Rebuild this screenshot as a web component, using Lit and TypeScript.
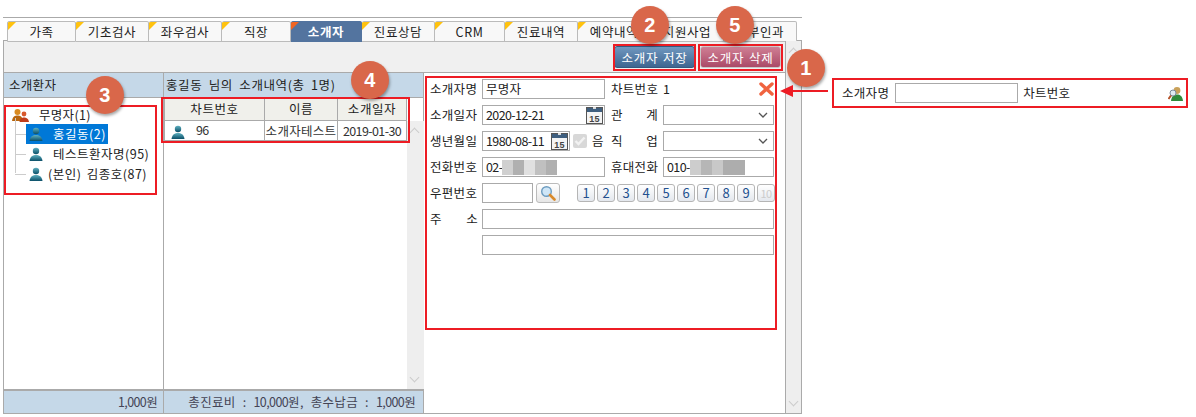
import { LitElement, html, svg, css } from "lit";
import { customElement } from "lit/decorators.js";

const TABS = ["가족", "기초검사", "좌우검사", "직장", "소개자", "진료상담", "CRM", "진료내역", "예약내역", "지원사업", "산부인과"];
const TAB_WIDTHS = [69, 73, 73, 69, 71, 73, 70, 73, 73, 73, 73];

const person = () => html`<svg class="person" width="14" height="14" viewBox="0 0 14 14">
  <defs><linearGradient id="pg" x1="0" y1="0" x2="0" y2="1"><stop offset="0" stop-color="#5fb0c0"/><stop offset="1" stop-color="#0a4f68"/></linearGradient></defs>
  <circle cx="7" cy="4" r="3.2" fill="url(#pg)"/>
  <path d="M0.5 14 C1 9.5 4 8 7 8 C10 8 13 9.5 13.5 14 Z" fill="url(#pg)"/>
</svg>`;

const users = () => svg`<svg width="17" height="14" viewBox="0 0 17 14">
  <circle cx="5.5" cy="4" r="3" fill="#d98a20"/>
  <path d="M0 13 C0.5 8.5 3 7.5 5.5 7.5 C8 7.5 10.5 8.5 11 13 Z" fill="#b8660f"/>
  <circle cx="12" cy="6" r="2.4" fill="#d8582c"/>
  <path d="M7.5 14 C8 10.5 10 9.5 12 9.5 C14 9.5 16.5 10.5 17 14 Z" fill="#bf3d1c"/>
</svg>`;

const calendar = () => html`<svg class="cal" width="17" height="17" viewBox="0 0 17 17">
  <rect x="0.5" y="0.5" width="16" height="16" fill="#f4f4f4" stroke="#555"/>
  <rect x="1" y="1" width="15" height="4" fill="#3f5f7f"/>
  <rect x="7" y="0" width="3" height="2" fill="#ddd"/>
  <text x="8.5" y="14.5" text-anchor="middle" font-size="9" font-weight="700" font-family="Liberation Sans" fill="#444">15</text>
</svg>`;

const phoneBlur = (shades: string[]) => html`<span class="blur">
  ${shades.map((c) => html`<i style="background:${c}"></i>`)}
</span>`;

@customElement("app-root")
export class AppRoot extends LitElement {
  static styles = css`
    :host {
      display: block;
      width: 1196px;
      height: 417px;
      position: relative;
      overflow: hidden;
      background: #fff;
      color: #222;
      letter-spacing: 0.3px;
      font: 12.5px/16px "Noto Sans CJK KR", sans-serif;
    }
    .num { letter-spacing: -0.6px; }
    .shell {
      width: 799px;
      margin: 0 0 0 3px;
      padding-top: 17px;
    }
    .topline {
      height: 1px;
      background: #aaa;
      margin-bottom: 3px;
    }
    .tabs {
      display: flex;
      padding-left: 4px;
      height: 20px;
      margin-bottom: -1px;
    }
    .tab {
      position: relative;
      box-sizing: border-box;
      height: 21px;
      border: 1px solid #bbb;
      border-left-width: 0;
      border-radius: 2px 2px 0 0;
      background: #f8f8f8;
      text-align: center;
      line-height: 20px;
      letter-spacing: 0.6px;
      overflow: hidden;
    }
    .tab:first-child { border-left-width: 1px; }
    .tab::before {
      content: "";
      position: absolute;
      left: 0;
      top: 0;
      border-style: solid;
      border-width: 8px 8px 0 0;
      border-color: #ffc20e transparent transparent transparent;
    }
    .tab.on {
      background: #53749f;
      color: #fff;
      font-weight: 700;
      border-color: #53749f;
    }
    .tab.on::before { border-top-color: #f26522; }
    .panel {
      box-sizing: border-box;
      height: 374px;
      border: 1px solid #aaa;
      display: grid;
      grid-template-columns: 1fr 16px;
    }
    .content { display: flex; flex-direction: column; min-width: 0; }
    .toolbar {
      box-sizing: border-box;
      height: 32px;
      background: #f0f0f0;
      border-bottom: 1px solid #aaa;
      display: flex;
      justify-content: flex-end;
      align-items: flex-start;
      gap: 5px;
      padding: 5px 4px 0 0;
    }
    .btn {
      box-sizing: border-box;
      height: 22px;
      border-radius: 3px;
      color: #fff;
      text-align: center;
      line-height: 21px;
      letter-spacing: 0.8px;
      word-spacing: 1px;
      border: 1px solid #888;
    }
    .btn.save { width: 81px; background: linear-gradient(#6f97bf, #3f6691); border-color: #35597f; }
    .btn.del { width: 81px; background: linear-gradient(#cf7f94, #ab4a68); border-color: #c9c9c9; }
    .body {
      flex: 1;
      display: grid;
      grid-template-columns: 160px 260px 1fr;
      min-height: 0;
    }
    .left, .mid {
      display: flex;
      flex-direction: column;
      border-right: 1px solid #aaa;
      min-height: 0;
    }
    .head {
      height: 24px;
      background: #c5d8e8;
      border-bottom: 1px solid #aaa;
      line-height: 23px;
      padding-left: 5px;
      flex: none;
    }
    .mid .head { padding-left: 2px; letter-spacing: 0.6px; word-spacing: 3px; }
    .foot {
      height: 24px;
      flex: none;
      box-sizing: border-box;
      background: #c5d8e8;
      border-top: 2px solid #aaa;
      text-align: right;
      line-height: 21px;
      color: #445;
      padding-right: 5px;
    }
    .mid .foot { padding-right: 7px; letter-spacing: 0.3px; word-spacing: 4px; }
    .tree {
      flex: 1;
      padding-top: 7px;
      position: relative;
    }
    .node {
      height: 20px;
      display: flex;
      align-items: center;
      white-space: nowrap;
    }
    .node.root { padding-left: 8px; gap: 10px; margin-bottom: -1px; }
    .node.leaf {
      position: relative;
      margin-left: 22px;
      gap: 10px;
      padding-left: 3px;
      width: max-content;
      box-sizing: border-box;
      letter-spacing: 0.5px;
    }
    .node.leaf::before {
      content: "";
      position: absolute;
      left: -11px;
      top: 10px;
      width: 11px;
      height: 1px;
      background: #ccc;
    }
    .node.leaf.sel { background: #0078d7; color: #fff; padding-right: 2px; }
    .node.leaf.tight { gap: 5px; word-spacing: 2px; }
    .branch {
      position: absolute;
      left: 11px;
      top: 20px;
      height: 55px;
      border-left: 1px solid #ccc;
    }
    .gridwrap {
      flex: 1;
      display: grid;
      grid-template-columns: 1fr 17px;
      grid-template-rows: 23px 1fr;
      min-height: 0;
    }
    .table {
      grid-row: 1 / 3;
      border-collapse: collapse;
      table-layout: fixed;
      width: 242px;
      height: max-content;
      margin-top: -1px;
    }
    .table th, .table td {
      border: 1px solid #aaa;
      padding: 0;
      font-weight: 400;
      white-space: nowrap;
      overflow: hidden;
    }
    .table th { height: 22px; background: #f0f0eb; text-align: center; letter-spacing: 0.6px; }
    .table td { height: 19px; text-align: center; color: #333; }
    .table td.chart { text-align: left; padding-left: 6px; }
    .table td.chart span { margin-left: 11px; vertical-align: 2px; }
    .table td.chart svg { vertical-align: -2px; }
    .gutter {
      grid-column: 2;
      grid-row: 2;
      background: #eee;
      position: relative;
    }
    .form {
      padding: 6px 0 0 6px;
      display: flex;
      flex-direction: column;
      gap: 6px;
    }
    .row {
      display: flex;
      align-items: center;
      height: 20px;
      white-space: nowrap;
    }
    .lab { width: 52px; flex: none; }
    .lab.gap { display: flex; justify-content: space-between; padding-right: 4px; box-sizing: border-box; }
    .lab2 { margin-left: 6px; width: 52px; flex: none; }
    .lab2.gap { display: flex; justify-content: space-between; padding-right: 5px; box-sizing: border-box; }
    .inp {
      box-sizing: border-box;
      height: 20px;
      border: 1px solid #aaa;
      background: #fff;
      line-height: 18px;
      padding-left: 3px;
      display: flex;
      align-items: center;
      flex: none;
    }
    .w123 { width: 123px; }
    .w88 { width: 88px; }
    .w111 { width: 111px; }
    .w50 { width: 51px; }
    .full { width: 292px; }
    .inp .cal { margin-left: auto; margin-right: 1px; }
    .caret { margin-left: auto; margin-right: 5px; }
    .check {
      box-sizing: border-box;
      width: 14px;
      height: 14px;
      margin-left: 3px;
      background: #d8d8d8;
      border-radius: 2px;
      display: flex;
      align-items: center;
      justify-content: center;
    }
    .um { margin-left: 5px; width: 13px; }
    .x { margin-left: auto; margin-right: 11px; }
    .blur { display: inline-flex; height: 15px; margin-left: 0; }
    .blur i { display: block; width: 11px; height: 15px; }
    .search {
      box-sizing: border-box;
      width: 24px;
      height: 20px;
      margin-left: 3px;
      border: 1px solid #bbb;
      border-radius: 3px;
      background: linear-gradient(#fff, #e6e6e6);
      display: flex;
      align-items: center;
      justify-content: center;
    }
    .pages { display: flex; gap: 2px; margin-left: 17px; }
    .page {
      box-sizing: border-box;
      width: 18px;
      height: 18px;
      border: 1px solid #b5b5b5;
      border-radius: 3px;
      background: linear-gradient(#fff, #e4e8ee);
      color: #23508f;
      text-align: center;
      line-height: 16px;
      font-size: 13px;
      letter-spacing: 0;
    }
    .page.off { color: #ccc; font-size: 11px; letter-spacing: -0.5px; }
    .side {
      background: #eee;
      border-left: 1px solid #aaa;
      position: relative;
    }
    .chev {
      position: absolute;
      left: 4px;
      width: 6px;
      height: 6px;
      border-left: 1px solid #ccc;
      border-top: 1px solid #ccc;
      transform: rotate(45deg);
    }
    .chev.down { transform: rotate(225deg); }

    /* annotations over the screenshot */
    .mark {
      position: absolute;
      box-sizing: border-box;
      border: 2px solid #ed1c24;
      pointer-events: none;
    }
    .dot {
      position: absolute;
      width: 38px;
      height: 38px;
      border-radius: 50%;
      background: #d9674a;
      box-shadow: 1px 2px 3px rgba(0, 0, 0, 0.35);
      color: #fff;
      font: 700 20px/38px "Liberation Sans", sans-serif;
      text-align: center;
    }
    .callout {
      position: absolute;
      left: 832px;
      top: 78px;
      width: 356px;
      height: 30px;
      box-sizing: border-box;
      border: 2px solid #ed1c24;
      background: #fff;
      display: flex;
      align-items: center;
      padding-left: 8px;
    }
    .callout .inp { width: 123px; margin: 0 5px 0 6px; }
    .callout svg { margin-left: auto; margin-right: 3px; }
    .arrow { position: absolute; left: 778px; top: 84px; }
  `;

  private renderForm() {
    const caret = html`<svg class="caret" width="10" height="6" viewBox="0 0 10 6"><path d="M1 1 L5 5 L9 1" fill="none" stroke="#555" stroke-width="1.3"/></svg>`;
    return html`<div class="form">
      <div class="row">
        <span class="lab">소개자명</span>
        <span class="inp w123">무명자</span>
        <span class="lab2">차트번호</span>
        <span class="num">1</span>
        <svg class="x" width="15" height="14" viewBox="0 0 15 14">
          <path d="M2 2 L13 12 M13 2 L2 12" stroke="#f0633f" stroke-width="3.4" stroke-linecap="round"/>
        </svg>
      </div>
      <div class="row">
        <span class="lab">소개일자</span>
        <span class="inp w123"><span class="num">2020-12-21</span> ${calendar()}</span>
        <span class="lab2 gap"><span>관</span><span>계</span></span>
        <span class="inp w111">${caret}</span>
      </div>
      <div class="row">
        <span class="lab">생년월일</span>
        <span class="inp w88"><span class="num">1980-08-11</span> ${calendar()}</span>
        <span class="check"><svg width="12" height="10" viewBox="0 0 12 10"><path d="M1.5 5 L4.5 8 L10.5 1.5" fill="none" stroke="#f2f2f2" stroke-width="2.4"/></svg></span>
        <span class="um">음</span>
        <span class="lab2 gap"><span>직</span><span>업</span></span>
        <span class="inp w111">${caret}</span>
      </div>
      <div class="row">
        <span class="lab">전화번호</span>
        <span class="inp w123"><span class="num">02-</span>${phoneBlur(["#d0d0d0", "#b0b0b0", "#e0e0e0", "#c0c0c0", "#b0b0b0"])}</span>
        <span class="lab2">휴대전화</span>
        <span class="inp w111"><span class="num">010-</span>${phoneBlur(["#cdcdcd", "#b6b6b6", "#c8c8c8", "#adadad", "#adadad"])}</span>
      </div>
      <div class="row">
        <span class="lab">우편번호</span>
        <span class="inp w50"></span>
        <span class="search">
          <svg width="16" height="16" viewBox="0 0 16 16">
            <circle cx="6.5" cy="6.5" r="4.8" fill="#cfe6f7" stroke="#6d9cc0" stroke-width="1.4"/>
            <path d="M10 10 L14.5 14.5" stroke="#d98a2b" stroke-width="2.6" stroke-linecap="round"/>
          </svg>
        </span>
        <span class="pages">
          ${[1, 2, 3, 4, 5, 6, 7, 8, 9, 10].map(
            (n) => html`<span class="page ${n === 10 ? "off" : ""}">${n}</span>`
          )}
        </span>
      </div>
      <div class="row">
        <span class="lab gap"><span>주</span><span>소</span></span>
        <span class="inp full"></span>
      </div>
      <div class="row">
        <span class="lab"></span>
        <span class="inp full"></span>
      </div>
    </div>`;
  }

  render() {
    return html`
      <div class="shell">
        <div class="topline"></div>
        <div class="tabs">
          ${TABS.map(
            (t, i) => html`<div class="tab ${t === "소개자" ? "on" : ""}" style="width:${TAB_WIDTHS[i]}px">${t}</div>`
          )}
        </div>
        <div class="panel">
          <div class="content">
            <div class="toolbar">
              <div class="btn save">소개자 저장</div>
              <div class="btn del">소개자 삭제</div>
            </div>
            <div class="body">
              <div class="left">
                <div class="head">소개환자</div>
                <div class="tree">
                  <div class="branch"></div>
                  <div class="node root">${users()}<span>무명자(1)</span></div>
                  <div class="node leaf sel">${person()}<span>홍길동(2)</span></div>
                  <div class="node leaf">${person()}<span>테스트환자명(95)</span></div>
                  <div class="node leaf tight">${person()}<span>(본인) 김종호(87)</span></div>
                </div>
                <div class="foot"><span class="num">1,000</span>원</div>
              </div>
              <div class="mid">
                <div class="head">홍길동 님의 소개내역(총 1명)</div>
                <div class="gridwrap">
                  <table class="table">
                    <colgroup><col style="width:100px" /><col style="width:73px" /><col style="width:69px" /></colgroup>
                    <tr><th>차트번호</th><th>이름</th><th>소개일자</th></tr>
                    <tr>
                      <td class="chart">${person()}<span class="num">96</span></td>
                      <td>소개자테스트</td>
                      <td class="num">2019-01-30</td>
                    </tr>
                  </table>
                  <div class="gutter">
                    <span class="chev" style="top:8px"></span>
                    <span class="chev down" style="bottom:8px"></span>
                  </div>
                </div>
                <div class="foot">총진료비 : <span class="num">10,000</span>원, 총수납금 : <span class="num">1,000</span>원</div>
              </div>
              ${this.renderForm()}
            </div>
          </div>
          <div class="side">
            <span class="chev" style="top:8px"></span>
            <span class="chev down" style="bottom:8px"></span>
          </div>
        </div>
      </div>

      <div class="mark" style="left:613px;top:44px;width:83px;height:27px"></div>
      <div class="mark" style="left:698px;top:44px;width:85px;height:27px"></div>
      <div class="mark" style="left:4px;top:105px;width:153px;height:90px"></div>
      <div class="mark" style="left:161px;top:97px;width:249px;height:46px"></div>
      <div class="mark" style="left:425px;top:76px;width:352px;height:254px"></div>

      <div class="callout">
        <span>소개자명</span>
        <span class="inp"></span>
        <span>차트번호</span>
        <svg width="15" height="15" viewBox="0 0 15 15">
          <circle cx="9" cy="4.5" r="3.4" fill="#c9a15a"/>
          <path d="M3 15 C3.5 10 6 8.5 9 8.5 C12 8.5 14.5 10 15 15 Z" fill="#2f8a3a"/>
          <circle cx="5" cy="7" r="3" fill="#dfeaf2" stroke="#7a8a9a"/>
          <path d="M3 9.5 L0.5 13" stroke="#b5532a" stroke-width="2"/>
        </svg>
      </div>
      <svg class="arrow" width="54" height="14" viewBox="0 0 54 14">
        <path d="M14 6 H50 V8 H14 Z M2 7 L15 1 V13 Z" fill="#ed1c24"/>
      </svg>

      <div class="dot" style="left:631px;top:6px">2</div>
      <div class="dot" style="left:716px;top:6px">5</div>
      <div class="dot" style="left:787px;top:49px">1</div>
      <div class="dot" style="left:86px;top:76px">3</div>
      <div class="dot" style="left:351px;top:61px">4</div>
    `;
  }
}
